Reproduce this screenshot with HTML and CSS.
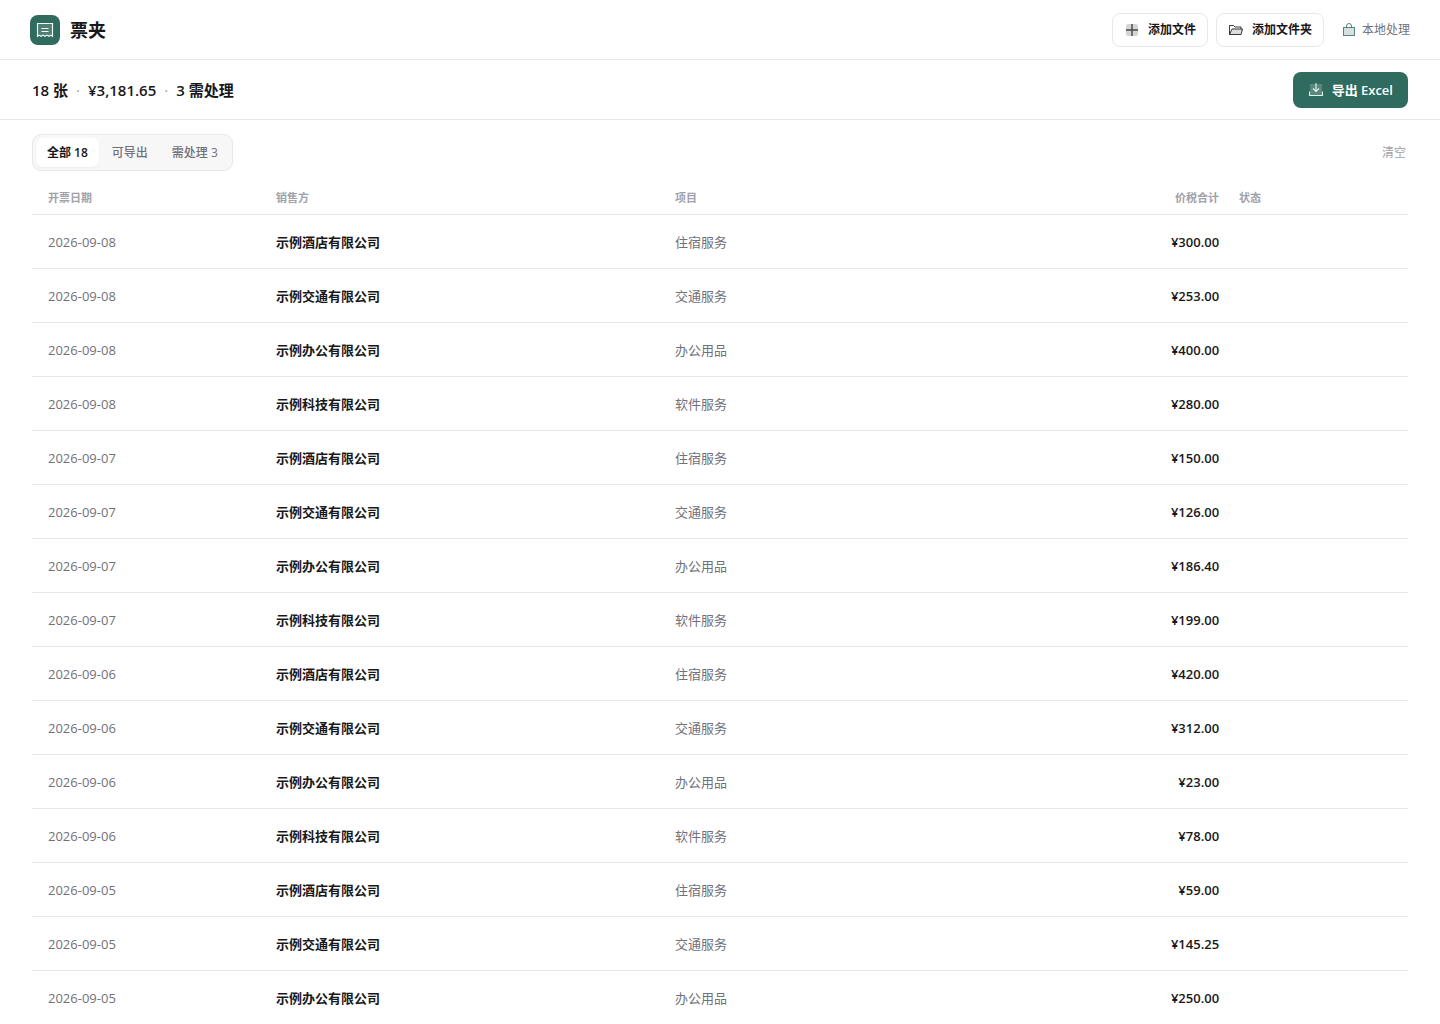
FILE: index.html
```html
<!DOCTYPE html>
<html lang="zh-CN">
<head>
    <meta charset="UTF-8">
    <meta name="viewport" content="width=device-width, initial-scale=1.0">
    <title>票夹</title>
    <link rel="stylesheet" href="styles.css">
</head>
<body>
    <!-- 顶部栏 -->
    <header class="topbar">
        <div class="brand">
            <span class="brand-mark">
                <svg width="18" height="18" viewBox="0 0 18 18" fill="none" stroke="currentColor" stroke-width="1.1" aria-hidden="true">
                    <path d="M1.5 2.500h15v12.800l-1.500-1.200-2 1.200-2-1.200-2 1.200-2-1.200-2 1.200-2-1.200-1.500 1.200z" fill="currentColor" fill-opacity="0.15"/>
                    <path d="M5.500 7.500h7M5.500 10.500h7"/>
                </svg>
            </span>
            <h1>票夹</h1>
        </div>
        <div class="actions">
            <button type="button" class="btn">
                <svg width="14" height="14" viewBox="0 0 14 14" fill="none" stroke="currentColor" aria-hidden="true">
                    <rect x="1" y="1" width="12" height="12" rx="2" fill="currentColor" fill-opacity="0.18" stroke="none"/>
                    <path d="M7 1v12M1 7h12" stroke-width="1.4" stroke-opacity="0.75"/>
                </svg>
                添加文件
            </button>
            <button type="button" class="btn">
                <svg width="14" height="14" viewBox="0 0 14 14" fill="none" stroke="currentColor" stroke-width="1" stroke-linejoin="round" stroke-opacity="0.85" aria-hidden="true">
                    <path d="M.5 11.500v-9h4l1.500 1.500h6v2"/>
                    <path d="M.5 11.500l2.500-5.500h10.500l-1.500 5.500z" fill="currentColor" fill-opacity="0.15"/>
                </svg>
                添加文件夹
            </button>
            <span class="local">
                <svg width="12" height="14" viewBox="0 0 12 14" fill="none" stroke="currentColor" stroke-width="1" stroke-opacity="0.8" aria-hidden="true">
                    <rect x="0.5" y="4.500" width="11" height="8" fill="currentColor" fill-opacity="0.2"/>
                    <path d="M3.500 4.500V3a2.500 2.500 0 0 1 5 0v1.500"/>
                </svg>
                本地处理
            </span>
        </div>
    </header>

    <!-- 汇总 -->
    <section class="summary">
        <div class="totals">
            <span>18 张</span>
            <span class="dot">·</span>
            <span>¥3,181.65</span>
            <span class="dot">·</span>
            <span>3 需处理</span>
        </div>
        <button type="button" class="btn-export">
            <svg width="14" height="14" viewBox="0 0 14 14" fill="none" stroke="currentColor" stroke-width="1.1" stroke-opacity="0.9" aria-hidden="true">
                <rect x="1" y="1" width="12" height="11" fill="currentColor" fill-opacity="0.2" stroke="none"/>
                <path d="M7 0v8M4 5.500l3 3 3-3M.5 8.500v4h13v-4"/>
            </svg>
            导出 Excel
        </button>
    </section>

    <main>
        <div class="toolbar">
            <div class="tabs">
                <button type="button" class="tab active">全部 18</button>
                <button type="button" class="tab">可导出</button>
                <button type="button" class="tab">需处理 3</button>
            </div>
            <button type="button" class="clear">清空</button>
        </div>

        <!-- 发票列表 -->
        <table class="invoices">
            <thead>
                <tr>
                    <th class="col-date">开票日期</th>
                    <th class="col-seller">销售方</th>
                    <th class="col-item">项目</th>
                    <th class="col-amount">价税合计</th>
                    <th class="col-status">状态</th>
                </tr>
            </thead>
            <tbody>
                <tr><td>2026-09-08</td><td class="seller">示例酒店有限公司</td><td>住宿服务</td><td class="amount">¥300.00</td><td></td></tr>
                <tr><td>2026-09-08</td><td class="seller">示例交通有限公司</td><td>交通服务</td><td class="amount">¥253.00</td><td></td></tr>
                <tr><td>2026-09-08</td><td class="seller">示例办公有限公司</td><td>办公用品</td><td class="amount">¥400.00</td><td></td></tr>
                <tr><td>2026-09-08</td><td class="seller">示例科技有限公司</td><td>软件服务</td><td class="amount">¥280.00</td><td></td></tr>
                <tr><td>2026-09-07</td><td class="seller">示例酒店有限公司</td><td>住宿服务</td><td class="amount">¥150.00</td><td></td></tr>
                <tr><td>2026-09-07</td><td class="seller">示例交通有限公司</td><td>交通服务</td><td class="amount">¥126.00</td><td></td></tr>
                <tr><td>2026-09-07</td><td class="seller">示例办公有限公司</td><td>办公用品</td><td class="amount">¥186.40</td><td></td></tr>
                <tr><td>2026-09-07</td><td class="seller">示例科技有限公司</td><td>软件服务</td><td class="amount">¥199.00</td><td></td></tr>
                <tr><td>2026-09-06</td><td class="seller">示例酒店有限公司</td><td>住宿服务</td><td class="amount">¥420.00</td><td></td></tr>
                <tr><td>2026-09-06</td><td class="seller">示例交通有限公司</td><td>交通服务</td><td class="amount">¥312.00</td><td></td></tr>
                <tr><td>2026-09-06</td><td class="seller">示例办公有限公司</td><td>办公用品</td><td class="amount">¥23.00</td><td></td></tr>
                <tr><td>2026-09-06</td><td class="seller">示例科技有限公司</td><td>软件服务</td><td class="amount">¥78.00</td><td></td></tr>
                <tr><td>2026-09-05</td><td class="seller">示例酒店有限公司</td><td>住宿服务</td><td class="amount">¥59.00</td><td></td></tr>
                <tr><td>2026-09-05</td><td class="seller">示例交通有限公司</td><td>交通服务</td><td class="amount">¥145.25</td><td></td></tr>
                <tr><td>2026-09-05</td><td class="seller">示例办公有限公司</td><td>办公用品</td><td class="amount">¥250.00</td><td></td></tr>
            </tbody>
        </table>
    </main>
</body>
</html>
```
FILE: styles.css
```css
* {
    margin: 0;
    padding: 0;
    box-sizing: border-box;
}

body {
    font-family: 'Open Sans', 'Noto Sans CJK SC', sans-serif;
    font-size: 13px;
    line-height: 20px;
    color: #18181b;
    background-color: #fff;
}

button {
    font: inherit;
    color: inherit;
    border: none;
    background: none;
    cursor: pointer;
}

/* 顶部栏 */
.topbar {
    display: flex;
    justify-content: space-between;
    align-items: center;
    height: 60px;
    padding: 0 30px;
    border-bottom: 1px solid #e8e8ea;
}

.brand {
    display: flex;
    align-items: center;
    gap: 10px;
}

.brand-mark {
    display: flex;
    align-items: center;
    justify-content: center;
    width: 30px;
    height: 30px;
    border-radius: 8px;
    color: #fff;
    background-color: #2f6b5e;
}

.brand h1 {
    font-size: 18px;
    font-weight: 700;
}

.actions {
    display: flex;
    align-items: center;
    gap: 8px;
}

.btn {
    display: flex;
    align-items: center;
    gap: 9px;
    height: 34px;
    padding: 0 11px 0 12px;
    border: 1px solid #e8e8ea;
    border-radius: 8px;
    font-size: 12px;
    font-weight: 600;
    line-height: 21px;
    background-color: #fff;
}

.local {
    display: flex;
    align-items: center;
    gap: 7px;
    margin-left: 11px;
    font-size: 12px;
    line-height: 21px;
    color: #71717a;
}

.local svg {
    color: #2f6b5e;
}

/* 汇总 */
.summary {
    display: flex;
    justify-content: space-between;
    align-items: center;
    height: 60px;
    padding: 0 32px;
    border-bottom: 1px solid #e8e8ea;
}

.totals {
    display: flex;
    gap: 8px;
    font-size: 15px;
    font-weight: 600;
}

.dot {
    font-weight: 400;
    color: #a1a1aa;
}

.btn-export {
    display: flex;
    align-items: center;
    gap: 9px;
    height: 36px;
    padding: 0 15px 0 16px;
    border-radius: 8px;
    font-weight: 600;
    color: #fff;
    background-color: #2f6b5e;
}

/* 筛选 */
main {
    padding: 14px 32px 0;
}

.toolbar {
    display: flex;
    justify-content: space-between;
    align-items: center;
}

.tabs {
    display: flex;
    gap: 2px;
    padding: 3px;
    border: 1px solid #e8e8ea;
    border-radius: 9px;
    background-color: #f7f7f8;
}

.tab {
    height: 29px;
    padding: 0 11px;
    border-radius: 7px;
    font-size: 12px;
    font-weight: 500;
    line-height: 21px;
    color: #71717a;
}

.tab.active {
    font-weight: 600;
    color: #18181b;
    background-color: #fff;
    box-shadow: 0 1px 2px rgba(0, 0, 0, 0.05);
}

.clear {
    padding: 0 2px;
    font-size: 12px;
    line-height: 21px;
    color: #a1a1aa;
}

/* 发票列表 */
.invoices {
    width: 100%;
    margin-top: 10px;
    border-collapse: separate;
    border-spacing: 0;
    table-layout: fixed;
}

.invoices th,
.invoices td {
    padding: 0 10px;
    border-bottom: 1px solid #e8e8ea;
    text-align: left;
}

.invoices th:first-child,
.invoices td:first-child {
    padding-left: 16px;
}

.invoices th {
    height: 34px;
    font-size: 11px;
    font-weight: 600;
    color: #a1a1aa;
}

.invoices td {
    height: 54px;
    color: #71717a;
}

.invoices .seller {
    font-weight: 600;
    color: #18181b;
}

.invoices .amount {
    font-weight: 600;
    color: #18181b;
}

.invoices .col-amount,
.invoices .amount {
    text-align: right;
}

.col-date {
    width: 17%;
}

.col-seller {
    width: 29%;
}

.col-item {
    width: 28%;
}

.col-amount,
.col-status {
    width: 13%;
}
```
